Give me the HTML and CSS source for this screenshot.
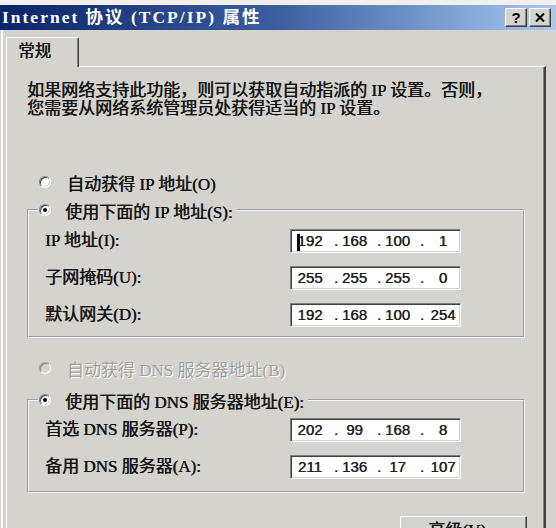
FILE: index.html
```html
<!DOCTYPE html>
<html lang="zh-CN">
<head>
<meta charset="utf-8">
<title>Internet 协议 (TCP/IP) 属性</title>
<link rel="stylesheet" href="styles.css">
</head>
<body>
<div class="window">
  <div class="titlebar">
    <span class="title">Internet 协议 (TCP/IP) 属性</span>
    <div class="caption-buttons">
      <span class="cbtn help">?</span>
      <span class="cbtn close"><svg width="10" height="9" viewBox="0 0 10 9"><path d="M1 0.5 L9 8.5 M9 0.5 L1 8.5" stroke="#000" stroke-width="2" fill="none"/></svg></span>
    </div>
  </div>
  <div class="tabrow"><div class="tab">常规</div></div>
  <div class="panel">
    <p class="desc">如果网络支持此功能，则可以获取自动指派的 IP 设置。否则，<br>您需要从网络系统管理员处获得适当的 IP 设置。</p>

    <div class="radio-row"><span class="radio"></span><span>自动获得 IP 地址(O)</span></div>

    <fieldset class="group group-ip">
      <legend><span class="legend-inner"><span class="radio checked"></span><span>使用下面的 IP 地址(S):</span></span></legend>
      <div class="rows">
        <span class="lbl">IP 地址(I):</span>
        <div class="ipbox"><span class="seg s1"><i class="caret"></i>192</span><span class="dot">.</span><span class="seg">168</span><span class="dot">.</span><span class="seg">100</span><span class="dot">.</span><span class="seg s4">1</span></div>
        <span class="lbl">子网掩码(U):</span>
        <div class="ipbox"><span class="seg s1">255</span><span class="dot">.</span><span class="seg">255</span><span class="dot">.</span><span class="seg">255</span><span class="dot">.</span><span class="seg s4">0</span></div>
        <span class="lbl">默认网关(D):</span>
        <div class="ipbox"><span class="seg s1">192</span><span class="dot">.</span><span class="seg">168</span><span class="dot">.</span><span class="seg">100</span><span class="dot">.</span><span class="seg s4">254</span></div>
      </div>
    </fieldset>

    <div class="radio-row disabled"><span class="radio off"></span><span>自动获得 DNS 服务器地址(B)</span></div>

    <fieldset class="group group-dns">
      <legend><span class="legend-inner"><span class="radio checked"></span><span>使用下面的 DNS 服务器地址(E):</span></span></legend>
      <div class="rows">
        <span class="lbl">首选 DNS 服务器(P):</span>
        <div class="ipbox"><span class="seg s1">202</span><span class="dot">.</span><span class="seg">99</span><span class="dot">.</span><span class="seg">168</span><span class="dot">.</span><span class="seg s4">8</span></div>
        <span class="lbl">备用 DNS 服务器(A):</span>
        <div class="ipbox"><span class="seg s1">211</span><span class="dot">.</span><span class="seg">136</span><span class="dot">.</span><span class="seg">17</span><span class="dot">.</span><span class="seg s4">107</span></div>
      </div>
    </fieldset>

    <div class="actions"><span class="btn">高级(V)...</span></div>
  </div>
</div>
</body>
</html>
```
FILE: styles.css
```css
html, body {
  margin: 0;
  padding: 0;
}
body {
  width: 556px;
  height: 528px;
  overflow: hidden;
  background: #d5d3ce;
  font-family: "Liberation Serif", "Noto Sans CJK SC", serif;
  font-size: 17px;
  color: #141414;
  text-shadow: 0.4px 0 0 #141414;
}
.window {
  height: 528px;
  box-sizing: border-box;
  padding-top: 5px;
  box-shadow: inset 0 5px #f1f0ee, inset 1px 0 #d5d3ce, inset 3px 0 #ffffff;
}
.titlebar {
  height: 25px;
  display: flex;
  align-items: center;
  justify-content: space-between;
  background: linear-gradient(90deg, #0a246a 0%, #3c5fa0 50%, #a6caf0 100%);
}
.title {
  color: #ffffff;
  text-shadow: none;
  font-weight: bold;
  font-size: 17.5px;
  padding-left: 2px;
  letter-spacing: 2px;
  white-space: nowrap;
  line-height: 25px;
}
.caption-buttons {
  display: flex;
  gap: 2px;
  margin-right: 5px;
}
.cbtn {
  width: 22px;
  height: 19px;
  box-sizing: border-box;
  background: #d5d3ce;
  border: 1px solid;
  border-color: #ffffff #404040 #404040 #ffffff;
  box-shadow: inset -1px -1px #808080;
  display: flex;
  align-items: center;
  justify-content: center;
  font: bold 15px "Liberation Sans", sans-serif;
  color: #000;
  text-shadow: none;
}
.tabrow {
  display: flex;
  padding: 7px 0 0 6px;
  position: relative;
  z-index: 1;
  margin-bottom: -1px;
}
.tab {
  width: 73px;
  height: 30px;
  box-sizing: border-box;
  border-top: 1px solid #ffffff;
  border-left: 1px solid #ffffff;
  border-right: 1px solid #404040;
  box-shadow: inset -1px 0 #808080;
  border-radius: 2px 2px 0 0;
  background: #d5d3ce;
  padding-left: 11px;
  line-height: 28px;
  font-size: 16.5px;
}
.panel {
  margin-left: 6px;
  width: 540px;
  height: 470px;
  box-sizing: border-box;
  border-top: 1px solid #ffffff;
  border-left: 1px solid #ffffff;
  border-right: 2px solid #404040;
  box-shadow: inset -1px 0 #808080;
  padding: 15px 0 0 20px;
}
.desc {
  margin: 0;
  line-height: 18px;
  white-space: nowrap;
}
.radio-row {
  display: flex;
  align-items: center;
  height: 20px;
  margin: 54px 0 0 12px;
  white-space: nowrap;
}
.radio-row.disabled {
  margin-top: 20px;
  color: #a3a09a;
  text-shadow: 1px 1px #ffffff;
}
.radio {
  width: 12px;
  height: 12px;
  box-sizing: border-box;
  border-radius: 50%;
  border: 1px solid;
  border-color: #808080 #ffffff #ffffff #808080;
  box-shadow: inset 1px 1px #404040, inset -1px -1px #d5d3ce;
  background: #ffffff;
  position: relative;
  flex: none;
  margin-right: 16px;
}
.radio.off {
  background: #d5d3ce;
  border-color: #a3a09a #ffffff #ffffff #a3a09a;
  box-shadow: inset 1px 1px #8a8884;
}
.radio.checked::after {
  content: "";
  position: absolute;
  left: 3px;
  top: 3px;
  width: 4px;
  height: 4px;
  border-radius: 50%;
  background: #000;
}
.group {
  width: 498px;
  box-sizing: border-box;
  margin: 8px 0 0 0;
  padding: 9px 0 9px 16px;
  border: 2px groove #f2f2f2;
  min-width: 0;
}
.group-dns {
  margin-top: 12px;
  padding: 8px 0 12px 16px;
}
.group legend {
  margin-left: -7px;
  padding: 0 4px 0 1px;
  height: 20px;
}
.legend-inner {
  display: flex;
  align-items: center;
  height: 20px;
  white-space: nowrap;
}
.legend-inner .radio {
  margin-right: 14px;
}
.rows {
  display: grid;
  grid-template-columns: 245px 171px;
  row-gap: 13px;
  align-items: center;
}
.lbl {
  white-space: nowrap;
  line-height: 20px;
}
.ipbox {
  height: 24px;
  box-sizing: border-box;
  background: #ffffff;
  border: 1px solid;
  border-color: #808080 #ffffff #ffffff #808080;
  box-shadow: inset 1px 1px #404040, inset -1px -1px #d5d3ce;
  display: flex;
  align-items: center;
  font: 15px "Liberation Sans", sans-serif;
  color: #222;
  text-shadow: 0.3px 0 0 #222;
  line-height: 20px;
}
.seg {
  width: 35px;
  padding-right: 6px;
  box-sizing: border-box;
  text-align: center;
  flex: none;
}
.seg.s1 {
  width: 41px;
  padding-right: 3px;
}
.seg.s4 {
  width: 34px;
  padding-right: 0;
}
.dot {
  width: 8px;
  text-align: center;
  flex: none;
}
.caret {
  display: inline-block;
  width: 3px;
  height: 17px;
  margin-right: -3px;
  background: #000;
  vertical-align: middle;
}
.actions {
  width: 500px;
  display: flex;
  justify-content: flex-end;
  margin-top: 23px;
}
.btn {
  width: 127px;
  height: 27px;
  box-sizing: border-box;
  border: 1px solid;
  border-color: #ffffff #404040 #404040 #ffffff;
  box-shadow: inset -1px -1px #808080;
  display: flex;
  align-items: flex-start;
  justify-content: center;
  line-height: 20px;
  padding-top: 4px;
  white-space: nowrap;
}
```
